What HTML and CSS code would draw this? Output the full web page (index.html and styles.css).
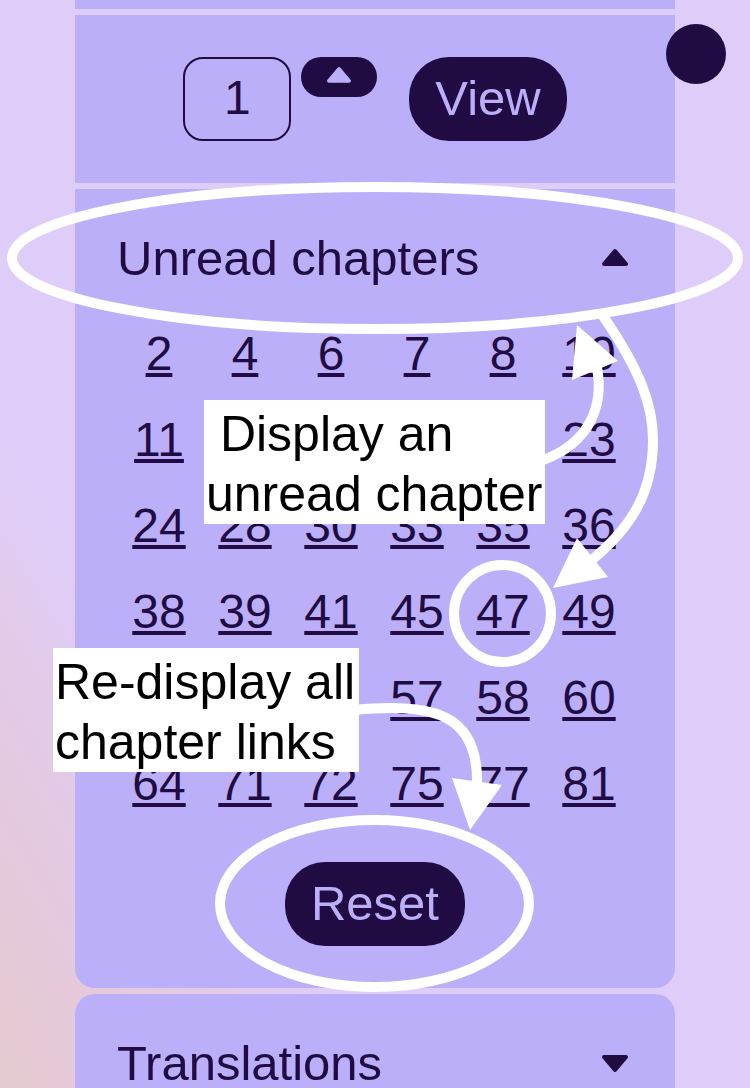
FILE: index.html
```html
<!DOCTYPE html>
<html lang="en">
<head>
<meta charset="utf-8">
<meta name="viewport" content="width=device-width, initial-scale=1">
<title>Unread chapters</title>
<link rel="stylesheet" href="styles.css">
</head>
<body>
<main class="panel">
  <section class="card card-top"></section>
  <section class="card picker">
    <input class="number" type="text" inputmode="numeric" value="1" aria-label="Chapter">
    <button class="step" type="button" aria-label="Next chapter">
      <svg class="step-icon" viewBox="0 0 26 18" aria-hidden="true"><path d="M13 2 L24 15 H2 Z"/></svg>
    </button>
    <button class="pill" type="button">View</button>
  </section>
  <section class="card card-end">
    <button class="heading" type="button" aria-expanded="true">
      <span>Unread chapters</span>
      <svg class="heading-icon" viewBox="0 0 26 18" aria-hidden="true"><path d="M13 2 L24 15 H2 Z"/></svg>
    </button>
    <ul class="chapters">
      <li><a href="#2">2</a></li><li><a href="#4">4</a></li><li><a href="#6">6</a></li><li><a href="#7">7</a></li><li><a href="#8">8</a></li><li><a href="#10">10</a></li>
      <li><a href="#11">11</a></li><li></li><li></li><li></li><li></li><li><a href="#23">23</a></li>
      <li><a href="#24">24</a></li><li><a href="#28">28</a></li><li><a href="#30">30</a></li><li><a href="#33">33</a></li><li><a href="#35">35</a></li><li><a href="#36">36</a></li>
      <li><a href="#38">38</a></li><li><a href="#39">39</a></li><li><a href="#41">41</a></li><li><a href="#45">45</a></li><li><a href="#47">47</a></li><li><a href="#49">49</a></li>
      <li></li><li></li><li></li><li><a href="#57">57</a></li><li><a href="#58">58</a></li><li><a href="#60">60</a></li>
      <li><a href="#64">64</a></li><li><a href="#71">71</a></li><li><a href="#72">72</a></li><li><a href="#75">75</a></li><li><a href="#77">77</a></li><li><a href="#81">81</a></li>
    </ul>
    <div class="actions"><button class="pill" type="button">Reset</button></div>
  </section>
  <section class="card card-start">
    <button class="heading" type="button" aria-expanded="false">
      <span>Translations</span>
      <svg class="heading-icon" viewBox="0 0 26 18" aria-hidden="true"><path d="M13 16 L24 3 H2 Z"/></svg>
    </button>
  </section>
</main>

<button class="dot" type="button" aria-label="Menu"></button>

<div class="notes">
  <svg class="marks" viewBox="0 0 750 1088" aria-hidden="true">
    <g class="line">
      <ellipse cx="375" cy="258" rx="363" ry="71"/>
      <circle cx="502.5" cy="613.5" r="48.5"/>
      <ellipse cx="374.5" cy="903.5" rx="154.5" ry="83.5"/>
      <path d="M543 460 C590 443 604 405 597 368"/>
      <path d="M603 316 C640 370 653 405 653 440 C653 492 632 528 588 563"/>
      <path d="M355 710 C435 702 479 715 477 785"/>
    </g>
    <g class="head">
      <path d="M577 325 L618 361 L572 380 Z"/>
      <path d="M553 588 L577 538 L608 577 Z"/>
      <path d="M470 830 L452 778 L502 785 Z"/>
    </g>
  </svg>
  <p class="note note-display">&nbsp;Display an<br>unread chapter</p>
  <p class="note note-reset">Re-display all<br>chapter links</p>
</div>
</body>
</html>
```
FILE: styles.css
```css
* { box-sizing: border-box; }

body {
  margin: 0;
  position: relative;
  min-height: 100vh;
  display: flex;
  flex-direction: column;
  color: #200b42;
  font-family: "Liberation Sans", Arial, sans-serif;
  font-size: 48px;
  background: linear-gradient(59deg, #e6cad0 0%, #e6c9d6 6%, #e3cae5 18%, #dfcdf9 28%);
}

button, input { font: inherit; color: inherit; }
button { border: 0; cursor: pointer; }

.panel {
  flex: 1;
  width: 80%;
  margin: 0 auto;
  display: flex;
  flex-direction: column;
  gap: 6px;
}

.card { background: #bbaffa; }
.card-top { height: 9px; }
.card-end { border-radius: 0 0 20px 20px; padding-bottom: 42px; }
.card-start { border-radius: 20px 20px 0 0; flex: 1; }

.picker {
  display: flex;
  justify-content: center;
  align-items: flex-start;
  gap: 10px;
  padding: 42px;
}

.number {
  width: 108px;
  height: 84px;
  padding: 0 0 4px;
  border: 2px solid #200b42;
  border-radius: 20px;
  background: transparent;
  text-align: center;
}

.step {
  width: 76px;
  height: 40px;
  margin-right: 22px;
  padding: 10px 0 0;
  display: flex;
  justify-content: center;
  align-items: flex-start;
  border-radius: 20px;
  background: #200b42;
  color: #bbaffa;
}

.step-icon, .heading-icon {
  fill: currentColor;
  stroke: currentColor;
  stroke-width: 4px;
  stroke-linejoin: round;
  overflow: visible;
}
.step-icon { width: 24px; }
.heading-icon { width: 26px; margin-right: 5px; }

.pill {
  height: 84px;
  padding: 0 26px 2px;
  border-radius: 40px;
  background: #200b42;
  color: #bbaffa;
  font-size: 49px;
}

.heading {
  width: 100%;
  padding: 41px 42px 25px;
  display: flex;
  justify-content: space-between;
  align-items: center;
  background: transparent;
  font-size: 49px;
  line-height: 56px;
  text-align: left;
}
.card-start .heading { padding-bottom: 0; }

.chapters {
  list-style: none;
  margin: 0;
  padding: 0 43px 0 41px;
  display: grid;
  grid-template-columns: repeat(6, 1fr);
  grid-auto-rows: 86px;
  line-height: 86px;
  text-align: center;
}

.chapters a {
  color: inherit;
  text-decoration: underline 4px;
  text-underline-offset: 3px;
  text-decoration-skip-ink: none;
}

.actions {
  display: flex;
  justify-content: center;
  padding-top: 35px;
}

.dot {
  position: absolute;
  top: 24px;
  right: 24px;
  width: 60px;
  height: 60px;
  border-radius: 50%;
  background: #200b42;
}

.notes {
  position: absolute;
  top: 0;
  left: 50%;
  width: 750px;
  margin-left: -375px;
  pointer-events: none;
}

.marks { display: block; width: 100%; }
.line { fill: none; stroke: #fff; stroke-width: 10px; }
.head { fill: #fff; }

.note {
  position: absolute;
  margin: 0;
  padding: 4px 2px 0;
  background: #fff;
  color: #000;
  font-size: 50px;
  line-height: 60px;
  white-space: nowrap;
}
.note-display { top: 400px; left: 204px; width: 341px; }
.note-reset { top: 648px; left: 53px; width: 306px; }
```
